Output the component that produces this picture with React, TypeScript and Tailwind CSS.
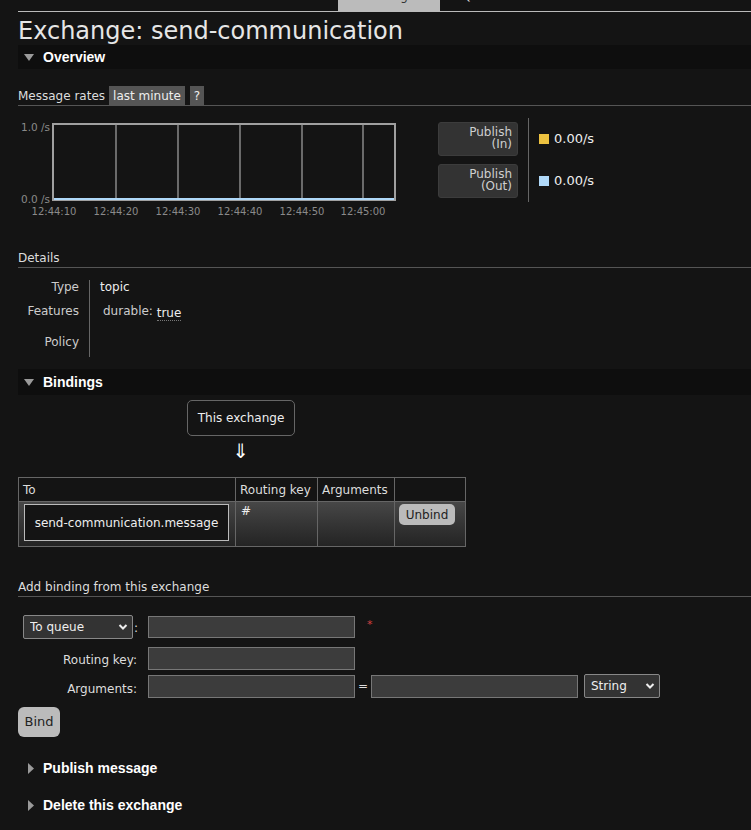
import React from "react";

const Down = () => (
  <svg width="10" height="7" viewBox="0 0 10 7" className="ml-[6px] shrink-0">
    <path d="M0 0H10L5 7Z" fill="#9a9a9a" />
  </svg>
);

const Right = () => (
  <svg width="6" height="11" viewBox="0 0 6 11" className="ml-[10px] shrink-0">
    <path d="M0 0L6 5.5L0 11Z" fill="#9a9a9a" />
  </svg>
);

const Chevron = () => (
  <svg width="10" height="7" viewBox="0 0 10 7" className="absolute right-[5px] top-1/2 -translate-y-1/2 pointer-events-none">
    <path d="M1.5 1.5L5 5L8.5 1.5" stroke="#eee" strokeWidth="2" fill="none" />
  </svg>
);

function Chart() {
  const xs = [36, 98, 160, 222, 284, 345];
  const labels = ["12:44:10", "12:44:20", "12:44:30", "12:44:40", "12:44:50", "12:45:00"];
  return (
    <svg width="420" height="100" viewBox="0 0 420 100" className="shrink-0">
      <rect x="35" y="6" width="342" height="76" fill="#141414" stroke="#a0a0a0" strokeWidth="2" />
      {xs.slice(1).map((x) => (
        <line key={x} x1={x} y1="6" x2={x} y2="82" stroke="#9a9a9a" strokeWidth="1.3" />
      ))}
      <line x1="36" y1="81" x2="376" y2="81" stroke="#afd8f8" strokeWidth="2" />
      <text x="32" y="12.5" textAnchor="end" fontSize="10.5" fill="#8a8a8a" fontFamily="DejaVu Sans, sans-serif">1.0 /s</text>
      <text x="32" y="84.5" textAnchor="end" fontSize="10.5" fill="#8a8a8a" fontFamily="DejaVu Sans, sans-serif">0.0 /s</text>
      {xs.map((x, i) => (
        <text key={i} x={x} y="96.5" textAnchor="middle" fontSize="10" fill="#8a8a8a" fontFamily="DejaVu Sans, sans-serif">
          {labels[i]}
        </text>
      ))}
    </svg>
  );
}

export default function App() {
  return (
    <div className="w-[751px] min-h-[830px] bg-[#141414] text-[#dddddd] overflow-hidden text-[12px] font-['DejaVu_Sans',Verdana,sans-serif]">
      <div className="pl-[18px]">
        {/* tabs */}
        <div className="h-[12px] border-b border-[#bbbbbb] flex">
          <div className="ml-[320px] w-[102px] h-[11px] bg-[#bbbbbb] overflow-hidden text-center text-[#333] leading-[12px]">
            <div className="-mt-[10px]">Exchanges</div>
          </div>
          <div className="ml-[22px] h-[11px] overflow-hidden leading-[12px] text-[#ddd]">
            <div className="-mt-[10px]">Queues and Streams</div>
          </div>
        </div>

        {/* title */}
        <div className="h-[33px] pt-[7px] text-[24px] leading-[25px] text-[#e6e6e6]">Exchange: send-communication</div>

        {/* overview bar */}
        <div className="h-[24px] bg-[#0e0e0e] flex items-center">
          <Down />
          <span className="ml-[9px] font-bold text-[14px] text-white font-['Liberation_Sans',Arial,sans-serif]">Overview</span>
        </div>

        {/* message rates */}
        <div className="mt-[17px] h-[20px] border-b border-[#555] flex items-stretch">
          <span className="flex items-center">Message rates</span>
          <span className="ml-[4px] px-[4px] bg-[#555] flex items-center text-[#eee]">last minute</span>
          <span className="ml-[5px] px-[4px] bg-[#555] flex items-center text-[#eee]">?</span>
        </div>

        {/* chart + legend */}
        <div className="mt-[12px] flex items-start">
          <Chart />
          <div className="w-[80px] flex flex-col gap-[8px] pt-[4px]">
            <div className="h-[34px] rounded-[3px] bg-[#333] border border-[#3c3c3c] text-right pr-[5px] pt-[3px] leading-[12px] text-[#cfcfcf]">
              <div>Publish</div>
              <div>(In)</div>
            </div>
            <div className="h-[34px] rounded-[3px] bg-[#333] border border-[#3c3c3c] text-right pr-[5px] pt-[3px] leading-[12px] text-[#cfcfcf]">
              <div>Publish</div>
              <div>(Out)</div>
            </div>
          </div>
          <div className="ml-[10px] w-px h-[84px] bg-[#666]" />
          <div className="ml-[10px] flex flex-col gap-[8px] pt-[4px]">
            <div className="h-[34px] flex items-center gap-[5px] text-[13px] text-[#eee]">
              <span className="w-[10px] h-[10px] bg-[#edc240]" />
              0.00/s
            </div>
            <div className="h-[34px] flex items-center gap-[5px] text-[13px] text-[#eee]">
              <span className="w-[10px] h-[10px] bg-[#afd8f8]" />
              0.00/s
            </div>
          </div>
        </div>

        {/* details */}
        <div className="mt-[31px] leading-[16px] pt-[1px] pb-[1px] border-b border-[#555]">Details</div>
        <div className="mt-[12px] flex leading-[14px]">
          <div className="w-[72px] border-r border-[#666] text-right pr-[10px] text-[#cccccc]">
            <div className="h-[24px]">Type</div>
            <div className="h-[31px]">Features</div>
            <div className="h-[22px]">Policy</div>
          </div>
          <div className="pl-[10px] text-[#eeeeee]">
            <div className="h-[24px]">topic</div>
            <div className="h-[31px] pl-[3px] text-[#cccccc]">
              durable: <span className="inline-block translate-y-[2px] border-b border-dotted border-[#777] leading-[13px] text-[#eee]">true</span>
            </div>
            <div className="h-[22px]" />
          </div>
        </div>

        {/* bindings bar */}
        <div className="mt-[12px] h-[26px] bg-[#0e0e0e] flex items-center">
          <Down />
          <span className="ml-[9px] font-bold text-[14px] text-white font-['Liberation_Sans',Arial,sans-serif]">Bindings</span>
        </div>

        <div className="w-[446px] flex flex-col items-center">
          <div className="mt-[5px] w-[108px] h-[36px] border border-[#666] rounded-[5px] flex items-center justify-center text-[#eee]">
            This exchange
          </div>
          <div className="mt-[5px] h-[20px] text-[20px] leading-[20px] text-white">⇓</div>
        </div>

        {/* bindings table */}
        <div className="mt-[16px] w-[448px] border-l border-t border-[#666]">
          <div className="flex h-[24px]">
            <div className="w-[217px] border-r border-b border-[#666] pl-[4px] flex items-center">To</div>
            <div className="w-[82px] border-r border-b border-[#666] pl-[4px] flex items-center">Routing key</div>
            <div className="w-[77px] border-r border-b border-[#666] pl-[4px] flex items-center">Arguments</div>
            <div className="w-[71px] border-r border-b border-[#666]" />
          </div>
          <div className="flex h-[45px] bg-linear-to-b from-[#474747] to-[#232323]">
            <div className="w-[217px] border-r border-b border-[#666] pl-[5px] pt-[2px]">
              <div className="w-[205px] h-[37px] border border-[#bbbbbb] bg-[#141414] flex items-center justify-center text-[#eee]">
                send-communication.message
              </div>
            </div>
            <div className="w-[82px] border-r border-b border-[#666] pl-[5px] pt-[2px] leading-[14px] text-[#eee]">#</div>
            <div className="w-[77px] border-r border-b border-[#666]" />
            <div className="w-[71px] border-r border-b border-[#666] pl-[4px] pt-[2px]">
              <div className="w-[56px] h-[21px] rounded-[5px] bg-[#bbbbbb] text-[#222] flex items-center justify-center">Unbind</div>
            </div>
          </div>
        </div>

        {/* add binding */}
        <div className="mt-[31px] leading-[16px] pt-[1px] pb-[1px] border-b border-[#555]">Add binding from this exchange</div>

        <div className="mt-[18px] flex items-center h-[24px]">
          <div className="w-[130px] pl-[5px] flex items-center">
            <div className="relative w-[110px] h-[24px]">
              <select className="appearance-none w-full h-full bg-[#333] border border-[#888] rounded-[2px] pl-[6px] text-[#eee] text-[12px] outline-none">
                <option>To queue</option>
              </select>
              <Chevron />
            </div>
            <span className="ml-[1px] pt-[2px]">:</span>
          </div>
          <input className="w-[207px] h-[22px] bg-[#3c3c3c] border border-[#777] outline-none" />
          <span className="ml-[12px] text-[#d04040] text-[11px] -mt-[4px]">*</span>
        </div>

        <div className="mt-[8px] flex items-center h-[23px]">
          <div className="w-[130px] text-right pr-[11px] pt-[3px]">Routing key:</div>
          <input className="w-[207px] h-[23px] bg-[#3c3c3c] border border-[#777] outline-none" />
        </div>

        <div className="mt-[4px] flex items-center h-[24px]">
          <div className="w-[130px] text-right pr-[11px] pt-[5px]">Arguments:</div>
          <input className="w-[207px] h-[23px] bg-[#3c3c3c] border border-[#777] outline-none" />
          <span className="w-[16px] text-center">=</span>
          <input className="w-[207px] h-[23px] bg-[#3c3c3c] border border-[#777] outline-none" />
          <div className="relative ml-[6px] w-[76px] h-[24px]">
            <select className="appearance-none w-full h-full bg-[#333] border border-[#888] rounded-[2px] pl-[6px] text-[#eee] text-[12px] outline-none">
              <option>String</option>
            </select>
            <Chevron />
          </div>
        </div>

        <div className="mt-[9px] w-[42px] h-[30px] rounded-[6px] bg-[#bbbbbb] text-[#222] text-[13px] flex items-center justify-center">Bind</div>

        <div className="mt-[19px] h-[24px] flex items-center">
          <Right />
          <span className="ml-[9px] font-bold text-[14px] text-white font-['Liberation_Sans',Arial,sans-serif]">Publish message</span>
        </div>
        <div className="mt-[13px] h-[24px] flex items-center">
          <Right />
          <span className="ml-[9px] font-bold text-[14px] text-white font-['Liberation_Sans',Arial,sans-serif]">Delete this exchange</span>
        </div>
      </div>
    </div>
  );
}
